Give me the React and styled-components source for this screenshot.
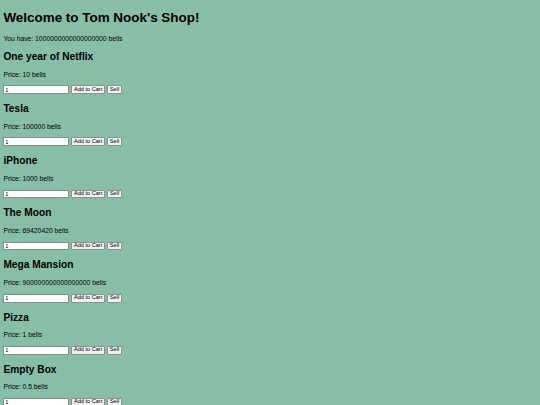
import React, { useState } from "react";
import styled, { createGlobalStyle } from "styled-components";

const GlobalStyle = createGlobalStyle`
  html, body {
    background: #86bea6;
  }
  body {
    margin: 3.39px;
    font-family: "Liberation Sans", Arial, Helvetica, sans-serif;
    font-size: 6.78px;
    color: #000;
  }
`;

const Title = styled.h1`
  font-size: 13.45px;
  font-weight: bold;
  line-height: 15.69px;
  margin: 6.5px 0 9.09px;
`;

const Text = styled.p`
  font-size: 6.78px;
  line-height: 7.63px;
  margin: 6.78px 0;
`;

const ItemName = styled.h2`
  font-size: 10.18px;
  font-weight: bold;
  line-height: 11.87px;
  margin: 9px 0 7.9px;
`;

const BuyForm = styled.form`
  display: flex;
  align-items: center;
  gap: 1.6px;
  height: 8.9px;
`;

const Quantity = styled.input`
  box-sizing: border-box;
  width: 66px;
  height: 8.9px;
  margin: 0;
  padding: 0 0.85px;
  border: 0.6px solid #8a8a8a;
  font-family: "Liberation Sans", Arial, sans-serif;
  font-size: 5.65px;
  line-height: 1;
  color: #000;
  background: #fff;
  outline: none;
`;

const ActionButton = styled.button`
  box-sizing: border-box;
  height: 8.9px;
  margin: 0;
  padding: 0 2px;
  font-family: "Liberation Sans", Arial, sans-serif;
  font-size: 5.6px;
  line-height: 1;
  color: #000;
  background: #f0f0f0;
  border: 0.6px solid #8f8f8f;
  border-radius: 1px;
`;

const items = [
  { name: "One year of Netflix", price: "10" },
  { name: "Tesla", price: "100000" },
  { name: "iPhone", price: "1000" },
  { name: "The Moon", price: "69420420" },
  { name: "Mega Mansion", price: "900000000000000000" },
  { name: "Pizza", price: "1" },
  { name: "Empty Box", price: "0.5" },
];

function ShopItem({ name, price }) {
  const [qty, setQty] = useState("1");
  return (
    <section>
      <ItemName>{name}</ItemName>
      <Text>Price: {price} bells</Text>
      <BuyForm onSubmit={(e) => e.preventDefault()}>
        <Quantity value={qty} onChange={(e) => setQty(e.target.value)} />
        <ActionButton type="button">Add to Cart</ActionButton>
        <ActionButton type="button">Sell</ActionButton>
      </BuyForm>
    </section>
  );
}

export default function App() {
  return (
    <>
      <GlobalStyle />
      <Title>Welcome to Tom Nook's Shop!</Title>
      <Text>You have: 1000000000000000000 bells</Text>
      {items.map((item) => (
        <ShopItem key={item.name} {...item} />
      ))}
    </>
  );
}
